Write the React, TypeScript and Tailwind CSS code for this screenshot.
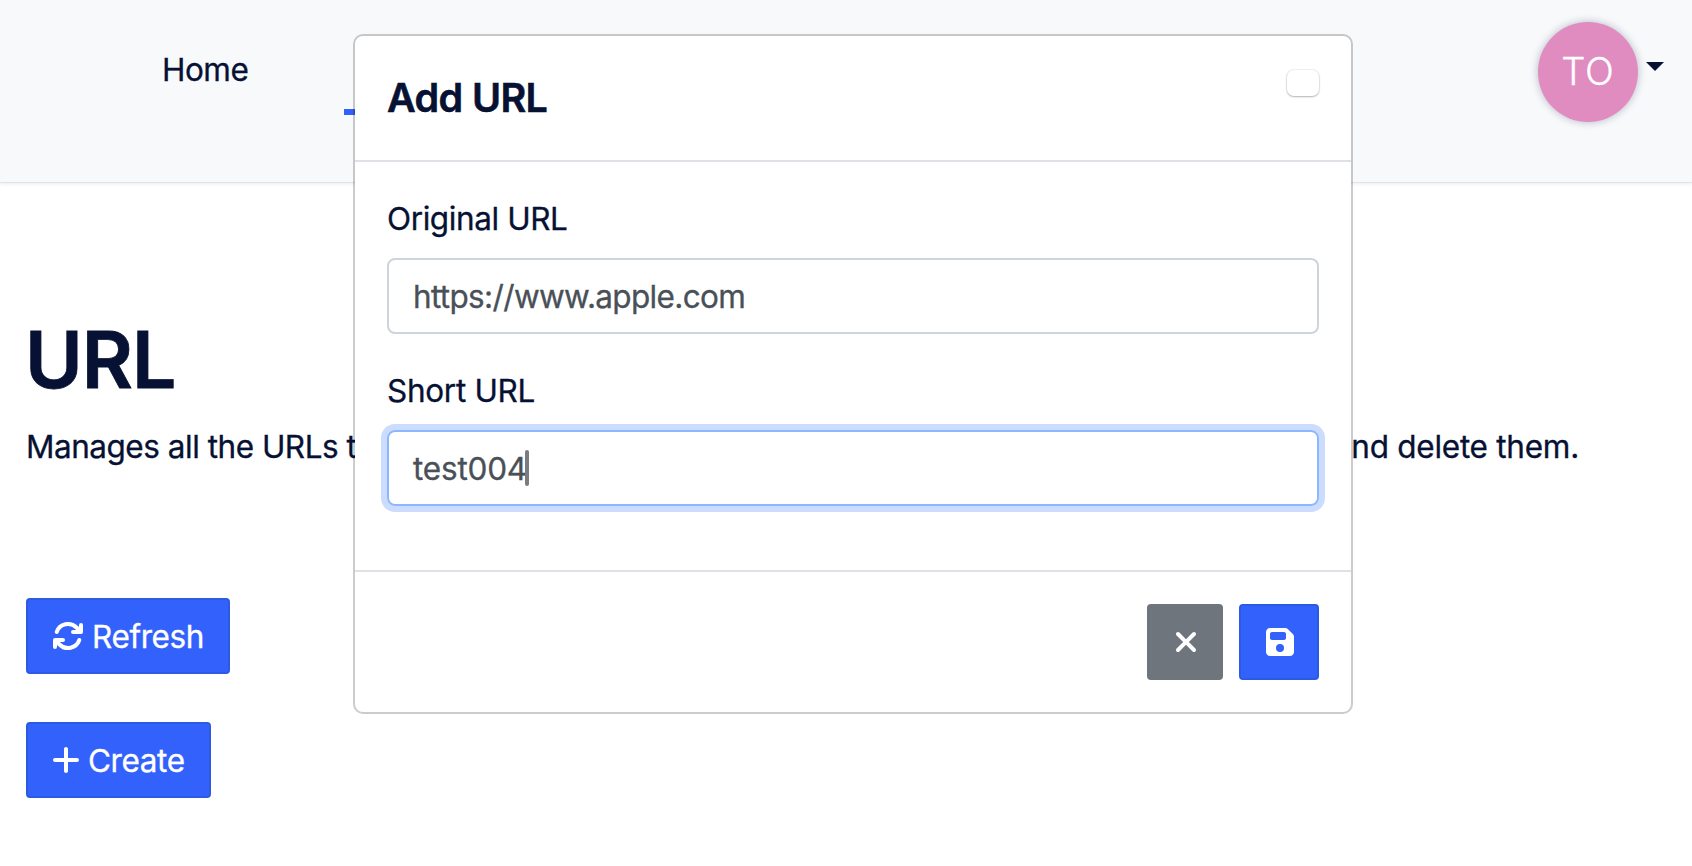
import { FaPlus, FaXmark, FaFloppyDisk } from "react-icons/fa6";

function RefreshIcon({ className }: { className?: string }) {
  return (
    <svg
      className={className}
      viewBox="0 0 512 512"
      fill="none"
      stroke="currentColor"
      strokeWidth="64"
      strokeLinecap="round"
      strokeLinejoin="round"
    >
      <path d="M75 192A192 192 0 0 1 392 120L464 192M464 80V192H336" />
      <path d="M437 320A192 192 0 0 1 120 392L48 320M48 432V320H176" />
    </svg>
  );
}

function NavBar() {
  return (
    <header className="flex h-[182px] shrink-0 items-start bg-[#f8f9fb] shadow-[0_1px_1px_rgba(46,54,128,0.09),0_2px_4px_rgba(46,54,80,0.08)]">
      <nav className="flex pt-[46px] pl-[162px] text-[31.5px] leading-[48px]">
        <a className="w-[182px] tracking-[-0.5px]">Home</a>
        <a className="mt-[63px] h-[6px] w-[120px] bg-[#3361fb]" />
      </nav>
      <div className="mt-[22px] mr-[28px] ml-auto flex items-start">
        <div className="flex h-[100px] w-[100px] items-center justify-center rounded-full bg-[#e08cc0] pb-px text-[38px] font-light tracking-[0.8px] text-white shadow-[0_0_8px_rgba(8,20,60,0.28)]">
          TO
        </div>
        <svg className="mt-[40px] ml-2 h-[9px] w-[18px]" viewBox="0 0 18 9">
          <path d="M0 0h18L9 9z" fill="#071133" />
        </svg>
      </div>
    </header>
  );
}

function UrlPage() {
  return (
    <main className="flex flex-col items-start pt-[130px] pl-[26px]">
      <h1 className="-ml-px text-[78.5px] leading-[96px] font-semibold tracking-[-1px] [-webkit-text-stroke:0.8px]">URL</h1>
      <div className="mt-[15px] flex h-[48px] w-[1553px] justify-between text-[31.5px] leading-[48px] whitespace-nowrap">
        <span className="tracking-[-0.48px]">Manages all the URLs to</span>
        <span className="tracking-[-0.26px]">and delete them.</span>
      </div>
      <button className="mt-[127px] flex h-[76px] w-[204px] items-center rounded-[4px] border-2 border-[#2e5ae3] bg-[#3361fb] pt-[2px] pl-[24px] text-[31.5px] tracking-[-0.4px] text-white">
        <RefreshIcon className="mr-[8px] mb-[2px] size-[32px]" />
        Refresh
      </button>
      <button className="mt-12 flex h-[76px] w-[185px] items-center rounded-[4px] border-2 border-[#2e5ae3] bg-[#3361fb] pt-[2px] pl-[24px] text-[31.5px] tracking-[-0.4px] text-white">
        <FaPlus className="mr-[8px] mb-[2px] h-[32px] w-[28px]" />
        Create
      </button>
    </main>
  );
}

function AddUrlDialog() {
  return (
    <section className="absolute top-[34px] left-[353px] flex h-[680px] w-[1000px] flex-col rounded-[10px] border-2 border-black/20 bg-white bg-clip-padding">
      <div className="flex h-[126px] items-start justify-between border-b-2 border-[#dee2e6] px-8 pt-[34px]">
        <h2 className="text-[39.5px] leading-[56px] font-semibold tracking-[-0.6px] [-webkit-text-stroke:0.6px]">Add URL</h2>
        <button className="h-[26px] w-[32px] rounded-[7px] bg-white shadow-[0_0_1px_1px_rgba(0,0,0,0.06),0_1px_2px_rgba(0,0,0,0.25)]" />
      </div>
      <div className="flex h-[410px] flex-col border-b-2 border-[#dee2e6] px-8 pt-[33px] text-[31.5px]">
        <label className="mb-[15px] leading-[48px] tracking-[-0.4px]">Original URL</label>
        <div className="flex h-[76px] items-center rounded-[8px] border-2 border-[#ced4da] px-6 pt-[2px] tracking-[-0.66px] text-[#495057]">
          https://www.apple.com
        </div>
        <label className="mt-[33px] mb-[15px] leading-[48px] tracking-[-0.3px]">Short URL</label>
        <div className="flex h-[76px] items-center rounded-[8px] border-2 border-[#8cb8ff] px-6 pt-[2px] tracking-[-0.2px] text-[#495057] shadow-[0_0_0_6px_#ccdcff]">
          test004
          <span className="mb-[2px] -ml-[2px] h-[36px] w-[4px] rounded-[2px] bg-[#797d82]" />
        </div>
      </div>
      <div className="flex justify-end gap-4 px-8 pt-8 text-white">
        <button className="flex h-[76px] w-[76px] items-center justify-center rounded-[4px] bg-[#6e757c] pl-[2px]">
          <FaXmark className="h-[32px] w-[24px]" />
        </button>
        <button className="flex h-[76px] w-[80px] items-center justify-center rounded-[4px] border-2 border-[#2e5ae3] bg-[#3361fb] pl-[2px]">
          <FaFloppyDisk className="h-[32px] w-[28px]" />
        </button>
      </div>
    </section>
  );
}

export default function App() {
  return (
    <div className="relative flex h-[866px] w-[1692px] flex-col overflow-hidden bg-white font-['Inter',sans-serif] text-[#071133] [-webkit-text-stroke:0.3px]">
      <NavBar />
      <UrlPage />
      <AddUrlDialog />
    </div>
  );
}
